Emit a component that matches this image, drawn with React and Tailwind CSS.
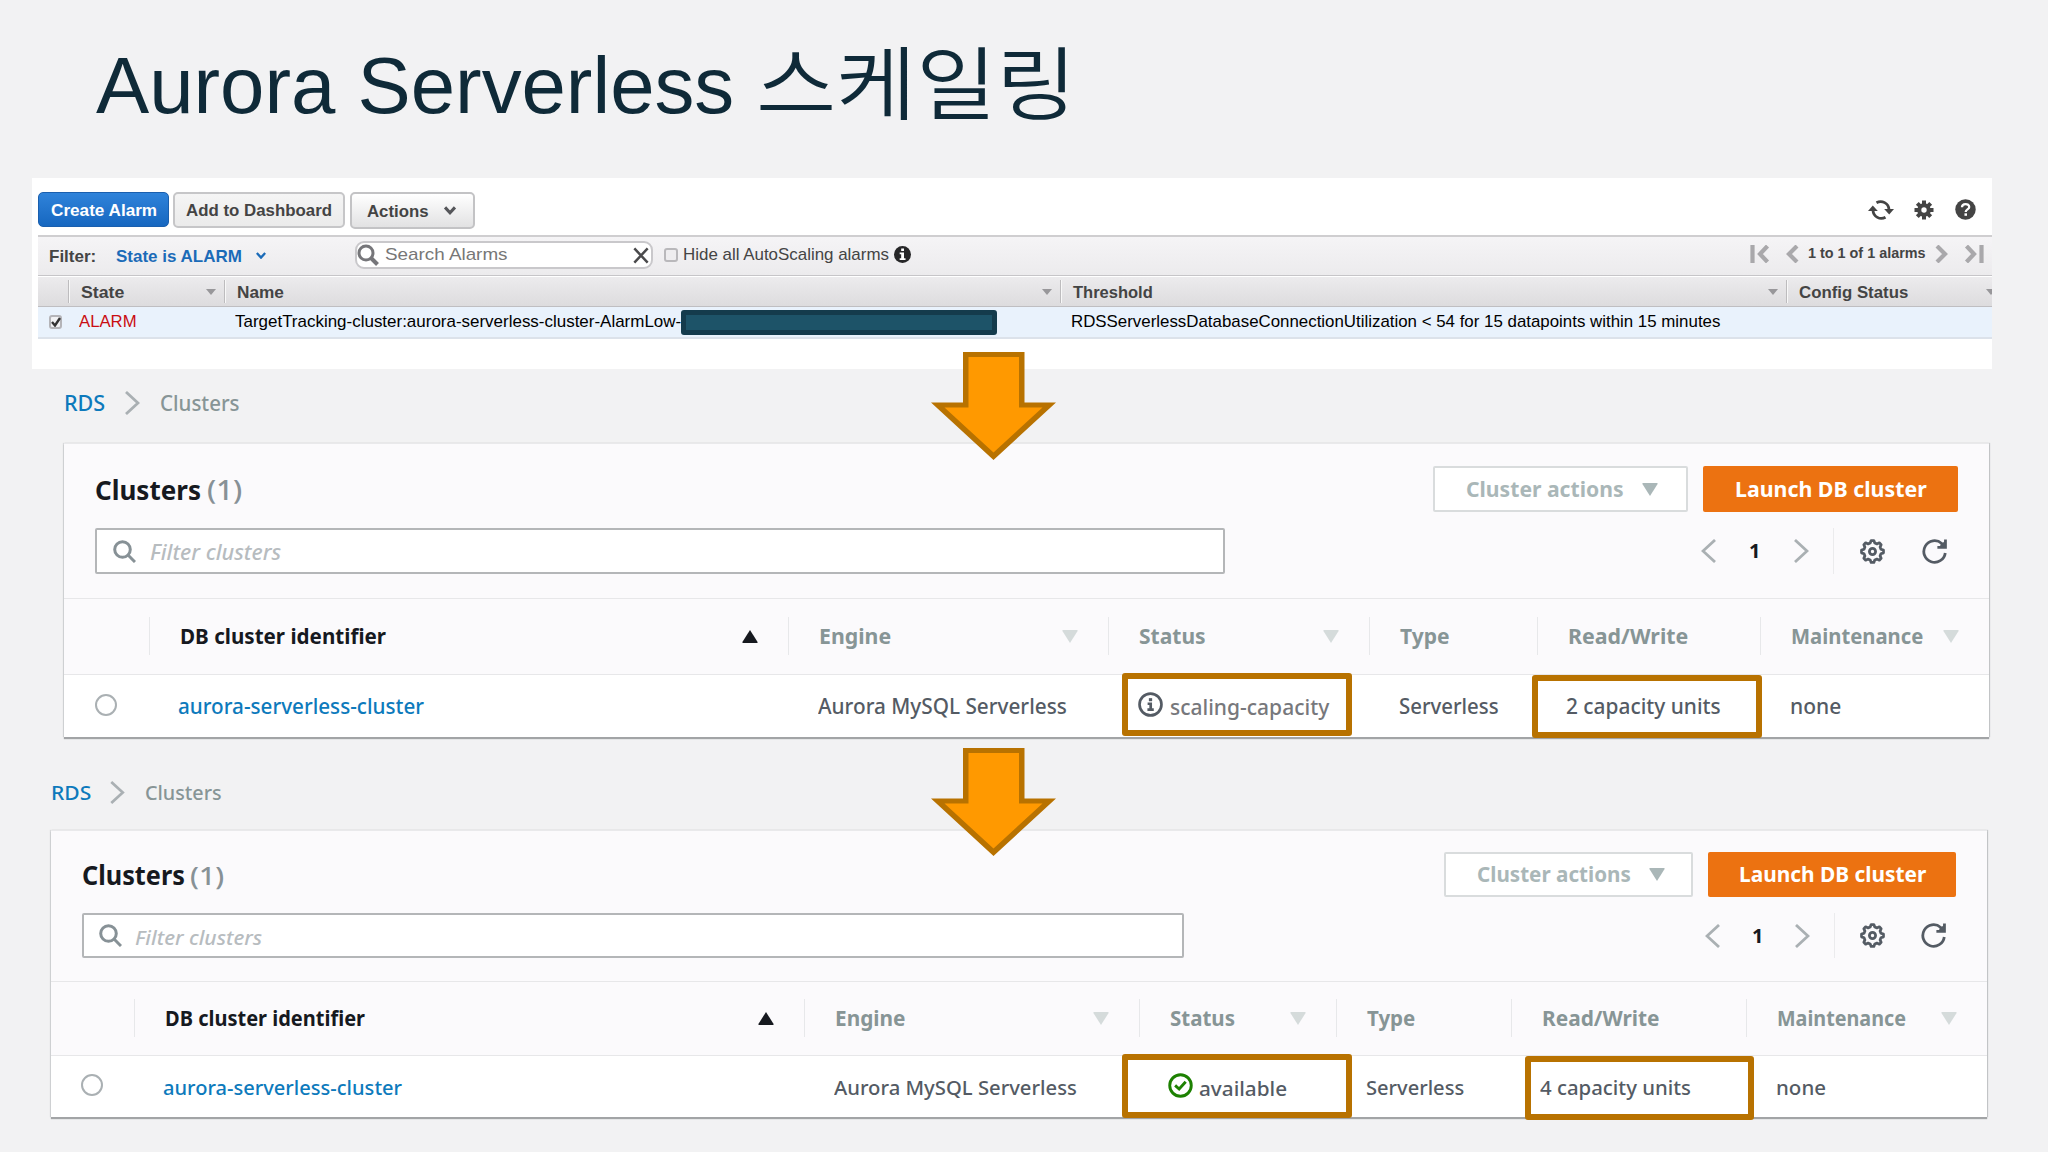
import { useLayoutEffect, useRef, useState } from "react";
import clsx from "clsx";

// Single line of text stretched to the width of its box.
function Fit({ className, children }) {
  const box = useRef(null);
  const line = useRef(null);
  const [scale, setScale] = useState(1);
  useLayoutEffect(() => {
    setScale(box.current.clientWidth / line.current.offsetWidth);
  }, []);
  return (
    <span ref={box} className={clsx("block shrink-0 text-left", className)}>
      <span
        ref={line}
        className="inline-block origin-left whitespace-nowrap"
        style={{ transform: `scaleX(${scale})` }}
      >
        {children}
      </span>
    </span>
  );
}

function Tri({ up, className }) {
  return (
    <svg viewBox="0 0 16 13" className={clsx("shrink-0", className)} fill="currentColor">
      <path d={up ? "M8 0 L15.6 12 Q15.8 13 15 13 L1 13 Q.2 13 .4 12 Z" : "M8 13 L.4 1 Q.2 0 1 0 L15 0 Q15.8 0 15.6 1 Z"} />
    </svg>
  );
}

function Chevron({ left, className }) {
  return (
    <svg viewBox="0 0 15 24" className={className} fill="none" stroke="currentColor" strokeWidth="2.8">
      <path d={left ? "M14 1 L2 12 L14 23" : "M1 1 L13 12 L1 23"} />
    </svg>
  );
}

function SearchIcon({ className }) {
  return (
    <svg viewBox="0 0 23 23" className={className} fill="none" stroke="currentColor" strokeWidth="3">
      <circle cx="9.5" cy="9.5" r="7.8" />
      <path d="M15 15 L22 22" />
    </svg>
  );
}

function GearOutline({ className }) {
  return (
    <svg viewBox="0 0 26 26" className={className} fill="none" stroke="currentColor" strokeWidth="2.9" strokeLinejoin="round">
      <path d="M10.6 4.2 L11.6 1.6 H14.4 L15.4 4.2 L17.6 5.1 L20.1 4 L22 5.9 L20.9 8.4 L21.8 10.6 L24.4 11.6 V14.4 L21.8 15.4 L20.9 17.6 L22 20.1 L20.1 22 L17.6 20.9 L15.4 21.8 L14.4 24.4 H11.6 L10.6 21.8 L8.4 20.9 L5.9 22 L4 20.1 L5.1 17.6 L4.2 15.4 L1.6 14.4 V11.6 L4.2 10.6 L5.1 8.4 L4 5.9 L5.9 4 L8.4 5.1 Z" />
      <circle cx="13" cy="13" r="3.2" />
    </svg>
  );
}

function Reload({ className }) {
  return (
    <svg viewBox="0 0 26 26" className={className} fill="none" stroke="currentColor" strokeWidth="2.9">
      <path d="M24.2 14.5 A11.2 11.2 0 1 1 20.5 4.6 L24 8.4" />
      <path d="M24.4 0.6 V8.6 H16" />
      <path d="M19 6 L24 2 V8.6 H19 Z" fill="currentColor" stroke="none" />
    </svg>
  );
}

function InfoRing({ className }) {
  return (
    <svg viewBox="0 0 26 26" className={className} fill="none" stroke="currentColor" strokeWidth="2.8">
      <circle cx="13" cy="13" r="11.4" />
      <path d="M13 6.4 V9.6" strokeWidth="3.4" />
      <path d="M10 12.2 H13.2 V18.2 M9.8 18.4 H16.4" />
    </svg>
  );
}

function CheckRing({ className }) {
  return (
    <svg viewBox="0 0 26 26" className={className} fill="none" stroke="currentColor" strokeWidth="3">
      <circle cx="13" cy="13" r="11.2" />
      <path d="M7.4 12.8 L11.6 16.6 L18.4 9.2" />
    </svg>
  );
}

function Arrow() {
  return (
    <svg viewBox="0 0 125 108" className="h-[108px] w-[125px]">
      <path d="M32 0 H93.500 V50.500 H125 L62.500 108 L0 50.500 H32 Z" fill="#b87200" />
      <path d="M37.500 5 H88 V55.500 H111.500 L62.500 100.500 L13.500 55.500 H37.500 Z" fill="#ff9900" />
    </svg>
  );
}

/* ---------- CloudWatch alarm list ---------- */

function HeadCell({ children, tri }) {
  return (
    <div className="flex h-[23px] items-center justify-between overflow-hidden border-l border-[#bdbcbe] pl-[12px] shadow-[inset_1px_0_0_#f8f8f8]">
      {children}
      {tri && (
        <svg viewBox="0 0 10 6" className="mr-[8px] h-[6px] w-[10px] shrink-0 fill-[#98979a]">
          <path d="M0 0 H10 L5 6 Z" />
        </svg>
      )}
    </div>
  );
}

function Pager() {
  return (
    <div className="ml-auto flex h-[18px] items-center text-[#a9a8ab]">
      <svg viewBox="0 0 20 18" className="mr-[16px] h-[18px] w-[20px]" fill="none" stroke="currentColor" strokeWidth="4.2">
        <path d="M2.500 0 V18" />
        <path d="M17.500 1 L10 9 L17.500 17" />
      </svg>
      <svg viewBox="0 0 13 18" className="mr-[9px] h-[18px] w-[13px]" fill="none" stroke="currentColor" strokeWidth="4.2">
        <path d="M11 1 L3 9 L11 17" />
      </svg>
      <Fit className="mb-[2px] w-[118px] text-[15px] font-bold leading-[18px] text-[#444]">1 to 1 of 1 alarms</Fit>
      <svg viewBox="0 0 13 18" className="ml-[9px] h-[18px] w-[13px]" fill="none" stroke="currentColor" strokeWidth="4.2">
        <path d="M2 1 L10 9 L2 17" />
      </svg>
      <svg viewBox="0 0 20 18" className="ml-[16px] h-[18px] w-[20px]" fill="none" stroke="currentColor" strokeWidth="4.2">
        <path d="M17.500 0 V18" />
        <path d="M2.500 1 L10 9 L2.500 17" />
      </svg>
    </div>
  );
}

function AlarmPanel() {
  return (
    <section className="ml-[32px] flex h-[191px] w-[1960px] flex-col bg-white pl-[6px] font-['Liberation_Sans',sans-serif] text-[#444]">
      <div className="flex h-[57px] shrink-0 items-start pt-[14px] text-[16.5px] font-bold leading-[20px]">
        <button className="flex h-[35px] w-[131px] items-center justify-center rounded-[5px] border border-[#1a5fae] bg-linear-to-b from-[#2f83da] to-[#1667c0] text-white">
          <Fit className="w-[106px]">Create Alarm</Fit>
        </button>
        <button className="ml-[4px] flex h-[36px] w-[172px] items-center justify-center rounded-[5px] border-2 border-[#c6c6c8] bg-linear-to-b from-[#f5f5f5] to-[#ebebeb]">
          <Fit className="w-[146px]">Add to Dashboard</Fit>
        </button>
        <button className="ml-[5px] flex h-[37px] w-[125px] items-center rounded-[5px] border-2 border-[#c3c3c5] bg-linear-to-b from-white to-[#e2e2e3] pl-[15px]">
          <Fit className="w-[62px]">Actions</Fit>
          <svg viewBox="0 0 14 10" className="ml-[14px] h-[9px] w-[14px]" fill="none" stroke="#55565a" strokeWidth="3.400">
            <path d="M1.500 1.500 L7 7.500 L12.500 1.500" />
          </svg>
        </button>
        <div className="ml-auto flex h-[35px] items-center pr-[16px]">
          <svg viewBox="0 0 26 20" className="h-[20px] w-[26px]" fill="none" stroke="#444" strokeWidth="2.800">
            <path d="M8.500 2.800 A8.300 8.300 0 0 1 21 9.500" />
            <path d="M17.500 17.200 A8.300 8.300 0 0 1 5 10.500" />
            <path d="M16.200 9 H26 L21.200 14.500 Z" fill="#444" stroke="none" />
            <path d="M0 11 H9.800 L4.800 5.500 Z" fill="#444" stroke="none" />
          </svg>
          <svg viewBox="0 0 20 20" className="ml-[20px] h-[20px] w-[20px]">
            <g stroke="#444" strokeWidth="4">
              <path d="M10 .5 V19.500 M.5 10 H19.500 M3.300 3.300 L16.700 16.700 M16.700 3.300 L3.300 16.700" />
            </g>
            <circle cx="10" cy="10" r="6.800" fill="#444" />
            <circle cx="10" cy="10" r="2.700" fill="#fff" />
          </svg>
          <svg viewBox="0 0 22 22" className="ml-[21px] h-[21px] w-[21px]">
            <circle cx="11" cy="11" r="10.700" fill="#444" />
            <path d="M7.300 8.700 C7.300 4.200 14.900 4.200 14.900 8.400 C14.900 10.900 11.200 10.900 11.200 13.500" fill="none" stroke="#fff" strokeWidth="2.400" />
            <path d="M9.900 15 H12.600 V17.600 H9.900 Z" fill="#fff" />
          </svg>
        </div>
      </div>

      <div className="flex h-[41px] shrink-0 items-center border-t-2 border-b border-t-[#cfced0] border-b-[#c6c5c8] bg-linear-to-b from-[#f5f4f6] to-[#ecebed] pb-[2px] pl-[11px] text-[17px] leading-[20px]">
        <Fit className="mt-[3px] w-[47px] font-bold">Filter:</Fit>
        <Fit className="mt-[3px] ml-[20px] w-[126px] font-bold text-[#1b6bb8]">State is ALARM</Fit>
        <svg viewBox="0 0 12 8" className="ml-[14px] h-[7px] w-[10px]" fill="none" stroke="#1b6bb8" strokeWidth="2.800">
          <path d="M1 1 L6 6.500 L11 1" />
        </svg>
        <div className="ml-[89px] flex h-[28px] w-[298px] items-center rounded-[9px] border-2 border-[#c9c8cb] bg-white text-[#777]">
          <svg viewBox="0 0 22 22" className="h-[22px] w-[22px]" fill="none" stroke="#76767a" strokeWidth="3">
            <circle cx="9" cy="9" r="7" />
            <path d="M14 14 L20.500 20.500" strokeWidth="4" />
          </svg>
          <Fit className="ml-[6px] w-[123px]">Search Alarms</Fit>
          <svg viewBox="0 0 18 18" className="ml-auto mr-[2px] h-[17px] w-[16px]" fill="none" stroke="#4a4a4c" strokeWidth="2.800">
            <path d="M1.500 1 L16.500 17 M16.500 1 L1.500 17" />
          </svg>
        </div>
        <span className="ml-[11px] h-[14px] w-[14px] rounded-[3px] border-2 border-[#b9b8bb] bg-[#eeedef]" />
        <Fit className="ml-[5px] w-[206px]">Hide all AutoScaling alarms</Fit>
        <svg viewBox="0 0 18 18" className="mb-[2px] ml-[5px] h-[17px] w-[17px]">
          <circle cx="9" cy="9" r="9" fill="#262628" />
          <path d="M7.600 2.700 H10.600 V5.300 H7.600 Z M6 7 H10.600 V13 H12.200 V14.800 H6 V13 H7.600 V8.800 H6 Z" fill="#fff" />
        </svg>
        <div className="mb-[2px] ml-auto flex pr-[8px]">
          <Pager />
        </div>
      </div>

      <div className="grid h-[31px] shrink-0 grid-cols-[30px_156px_836px_726px_1fr] items-center overflow-hidden border-t border-b border-t-white border-b-[#bfbec1] bg-linear-to-b from-[#ecebed] to-[#dddcde] text-[16.5px] font-bold leading-[20px]">
        <span />
        <HeadCell tri><Fit className="w-[43px]">State</Fit></HeadCell>
        <HeadCell tri><Fit className="w-[47px]">Name</Fit></HeadCell>
        <HeadCell tri><Fit className="w-[80px]">Threshold</Fit></HeadCell>
        <div className="-mr-[12px]">
          <HeadCell tri><Fit className="w-[109px]">Config Status</Fit></HeadCell>
        </div>
      </div>

      <div className="grid h-[32px] shrink-0 grid-cols-[41px_156px_836px_1fr] items-center border-b-2 border-[#dce2ea] bg-[#e9f2fc] text-[17px] leading-[20px] text-black">
        <span className="ml-[11px] flex h-[14px] w-[13px] items-center justify-center rounded-[3px] border-2 border-[#b4b4b8] bg-[#f1f1f3]">
          <svg viewBox="0 0 10 10" className="h-[10px] w-[10px] shrink-0" fill="none" stroke="#333" strokeWidth="2.400">
            <path d="M1 5 L4 8.500 L9 1" />
          </svg>
        </span>
        <Fit className="w-[58px] text-[#c90d12]">ALARM</Fit>
        <div className="flex items-center">
          <Fit className="w-[446px]">TargetTracking-cluster:aurora-serverless-cluster-AlarmLow-</Fit>
          <span className="h-[25px] w-[316px] rounded-[3px] border-[5px] border-[#143b4c] bg-[#1d5368]" />
        </div>
        <Fit className="w-[649px]">RDSServerlessDatabaseConnectionUtilization &lt; 54 for 15 datapoints within 15 minutes</Fit>
      </div>
    </section>
  );
}

/* ---------- RDS cluster list ---------- */

const scaling = {
  section: "ml-[64px] w-[1925px]",
  crumbs: "h-[74px] pb-[6px] text-[21px]",
  rds: "w-[41px]",
  crumbChevron: "ml-[20px] h-[24px] w-[15px]",
  crumbText: "ml-[20px] w-[80px]",
  top: "h-[155px] gap-[16px] pt-[23px]",
  bar: "h-[46px]",
  title: "w-[106px] text-[27px]",
  count: "ml-[6px] w-[35px] text-[27px]",
  actions: "w-[255px] pl-[31px]",
  actionsText: "w-[158px] text-[21px]",
  launch: "ml-[15px] w-[255px]",
  launchText: "w-[192px] text-[21px]",
  input: "w-[1130px] pl-[16px]",
  placeholder: "ml-[14px] w-[131px] text-[21px]",
  pager: "grid-cols-[48px_45px_39px_27px_62px_36px]",
  text: "text-[21px]",
  cols: "grid-cols-[85px_639px_320px_261px_168px_223px_229px]",
  head: "h-[76px]",
  row: "h-[63px]",
  radio: "ml-[31px]",
  names: ["w-[206px]", "w-[72px]", "w-[67px]", "w-[50px]", "w-[120px]", "w-[132px]"],
  idWidth: "w-[246px]",
  engineWidth: "w-[249px]",
  status: (
    <div className="flex items-center text-[#77787c]">
      <InfoRing className="-ml-px mb-[3px] h-[25px] w-[25px] text-[#545b64]" />
      <Fit className="mt-[2px] ml-[7px] w-[159px]">scaling-capacity</Fit>
    </div>
  ),
  typeWidth: "w-[100px]",
  statusBox: "left-[14px] -top-[2px] h-[63px] w-[230px]",
  capacityBox: "-left-[5px] top-0 h-[63px] w-[230px]",
  capacity: "2 capacity units",
  capacityWidth: "w-[155px]",
  noneWidth: "w-[51px]",
};

const available = {
  section: "ml-[51px] w-[1936px]",
  crumbs: "h-[93px] pt-[17px] text-[20.5px]",
  rds: "w-[40px]",
  crumbChevron: "ml-[19px] h-[23px] w-[15px]",
  crumbText: "ml-[20px] w-[77px]",
  top: "h-[151px] gap-[16px] pt-[22px]",
  bar: "h-[45px]",
  title: "w-[103px] text-[26px]",
  count: "ml-[5px] w-[34px] text-[26px]",
  actions: "w-[249px] pl-[31px]",
  actionsText: "w-[154px] text-[20.5px]",
  launch: "ml-[15px] w-[248px]",
  launchText: "w-[187px] text-[20.5px]",
  input: "w-[1102px] pl-[15px]",
  placeholder: "ml-[13px] w-[127px] text-[20.5px]",
  pager: "grid-cols-[47px_43px_39px_26px_61px_35px]",
  text: "text-[20.5px]",
  cols: "grid-cols-[83px_670px_335px_197px_175px_235px_241px]",
  head: "h-[74px]",
  row: "h-[62px]",
  radio: "ml-[30px]",
  names: ["w-[200px]", "w-[70px]", "w-[65px]", "w-[48px]", "w-[117px]", "w-[129px]"],
  idWidth: "w-[239px]",
  engineWidth: "w-[243px]",
  status: (
    <div className="flex items-center">
      <CheckRing className="-ml-[2px] mb-[3px] h-[25px] w-[25px] text-[#1d8102]" />
      <Fit className="mt-[2px] ml-[6px] w-[88px]">available</Fit>
    </div>
  ),
  typeWidth: "w-[98px]",
  statusBox: "-left-[17px] -top-[2px] h-[64px] w-[230px]",
  capacityBox: "left-[14px] top-0 h-[64px] w-[229px]",
  capacity: "4 capacity units",
  capacityWidth: "w-[151px]",
  noneWidth: "w-[50px]",
};

const columns = [
  { name: "DB cluster identifier", sort: "up" },
  { name: "Engine", sort: "down" },
  { name: "Status", sort: "down" },
  { name: "Type" },
  { name: "Read/Write" },
  { name: "Maintenance", sort: "down" },
];

function Highlight({ className }) {
  return <span className={clsx("absolute rounded-[3px] border-[6px] border-[#b87200]", className)} />;
}

function ClusterPanel({ t }) {
  return (
    <section className={clsx("font-['Noto_Sans',sans-serif] font-medium leading-[28px]", t.section)}>
      <nav className={clsx("flex items-center", t.crumbs)}>
        <Fit className={clsx("text-[#0d7abc]", t.rds)}>RDS</Fit>
        <Chevron className={clsx("text-[#aab0b3]", t.crumbChevron)} />
        <Fit className={clsx("text-[#879596]", t.crumbText)}>Clusters</Fit>
      </nav>

      <div className="border-t border-[#e9e9eb] bg-[#fbfafc] shadow-[0_2px_1px_0_#a2a4a6,1px_0_1px_0_#c9cbcd,-1px_0_1px_0_#d8d9db]">
        <div className={clsx("-mt-px flex flex-col px-[31px]", t.top)}>
          <div className={clsx("flex items-center", t.bar)}>
            <Fit className={clsx("mt-px font-bold text-[#16191f]", t.title)}>Clusters</Fit>
            <Fit className={clsx("mt-px text-[#879196]", t.count)}>(1)</Fit>
            <button className={clsx("ml-auto flex h-full items-center rounded-[2px] border-2 border-[#d9dcdd] bg-white text-[#aab7b8]", t.actions)}>
              <Fit className={clsx("mb-px font-bold", t.actionsText)}>Cluster actions</Fit>
              <Tri className="ml-[18px] h-[13px] w-[16px]" />
            </button>
            <button className={clsx("flex h-full items-center justify-center rounded-[2px] bg-[#ec7211] text-white", t.launch)}>
              <Fit className={clsx("mb-px font-bold", t.launchText)}>Launch DB cluster</Fit>
            </button>
          </div>
          <div className={clsx("flex items-center justify-between", t.bar)}>
            <div className={clsx("flex h-full items-center rounded-[2px] border-2 border-[#b4b6b8] bg-white", t.input)}>
              <SearchIcon className="h-[23px] w-[23px] text-[#879196]" />
              <Fit className={clsx("mt-[2px] italic text-[#b7bcbf]", t.placeholder)}>Filter clusters</Fit>
            </div>
            <div className={clsx("grid h-full items-center text-[#545b64]", t.pager)}>
              <Chevron left className="h-[24px] w-[15px] text-[#aab0b3]" />
              <span className="text-[20px] font-bold text-[#16191f]">1</span>
              <Chevron className="h-[24px] w-[15px] text-[#aab0b3]" />
              <span className="h-full w-px bg-[#ebebed]" />
              <GearOutline className="h-[25px] w-[25px]" />
              <Reload className="h-[25px] w-[25px]" />
            </div>
          </div>
        </div>

        <div className={clsx("grid items-center border-t border-[#e7e7e9] pb-px font-bold", t.cols, t.head, t.text)}>
          <span />
          {columns.map((c, i) => (
            <div
              key={c.name}
              className={clsx(
                "flex h-[38px] items-center justify-between border-l border-[#e7e8ea] pl-[30px] pr-[30px]",
                c.sort === "up" ? "text-[#16191f]" : "text-[#879596]"
              )}
            >
              <Fit className={t.names[i]}>{c.name}</Fit>
              {c.sort && (
                <Tri
                  up={c.sort === "up"}
                  className={clsx("h-[13px] w-[16px]", c.sort === "down" && "text-[#d5dbdb]")}
                />
              )}
            </div>
          ))}
        </div>

        <div className={clsx("grid items-center border-t border-[#e7e7e9] bg-white text-[#545b64]", t.cols, t.row, t.text)}>
          <span className={clsx("mb-[3px] h-[22px] w-[22px] rounded-full border-2 border-[#aab0b3]", t.radio)} />
          <div className="pl-[29px] text-[#0d7abc]">
            <Fit className={t.idWidth}>aurora-serverless-cluster</Fit>
          </div>
          <div className="pl-[30px]">
            <Fit className={t.engineWidth}>Aurora MySQL Serverless</Fit>
          </div>
          <div className="relative flex h-full items-center pl-[31px]">
            {t.status}
            <Highlight className={t.statusBox} />
          </div>
          <div className="pl-[30px]">
            <Fit className={t.typeWidth}>Serverless</Fit>
          </div>
          <div className="relative flex h-full items-center pl-[29px]">
            <Fit className={t.capacityWidth}>{t.capacity}</Fit>
            <Highlight className={t.capacityBox} />
          </div>
          <div className="pl-[30px]">
            <Fit className={t.noneWidth}>none</Fit>
          </div>
        </div>
      </div>
    </section>
  );
}

export default function App() {
  return (
    <main className="relative h-[1152px] w-[2048px] overflow-hidden bg-[#f2f2f3]">
      <h1 className="flex h-[178px] items-baseline pt-[38px] pl-[96px] text-[80px] leading-[80px] text-[#0f2a38]">
        <Fit className="w-[638px] font-['Liberation_Sans',sans-serif]">Aurora Serverless</Fit>
        <Fit className="ml-[22px] w-[320px] font-['Noto_Sans_CJK_KR',sans-serif] font-[350]">스케일링</Fit>
      </h1>
      <AlarmPanel />
      <ClusterPanel t={scaling} />
      <ClusterPanel t={available} />
      <div className="absolute left-[931px] top-[352px]">
        <Arrow />
      </div>
      <div className="absolute left-[931px] top-[748px]">
        <Arrow />
      </div>
    </main>
  );
}
